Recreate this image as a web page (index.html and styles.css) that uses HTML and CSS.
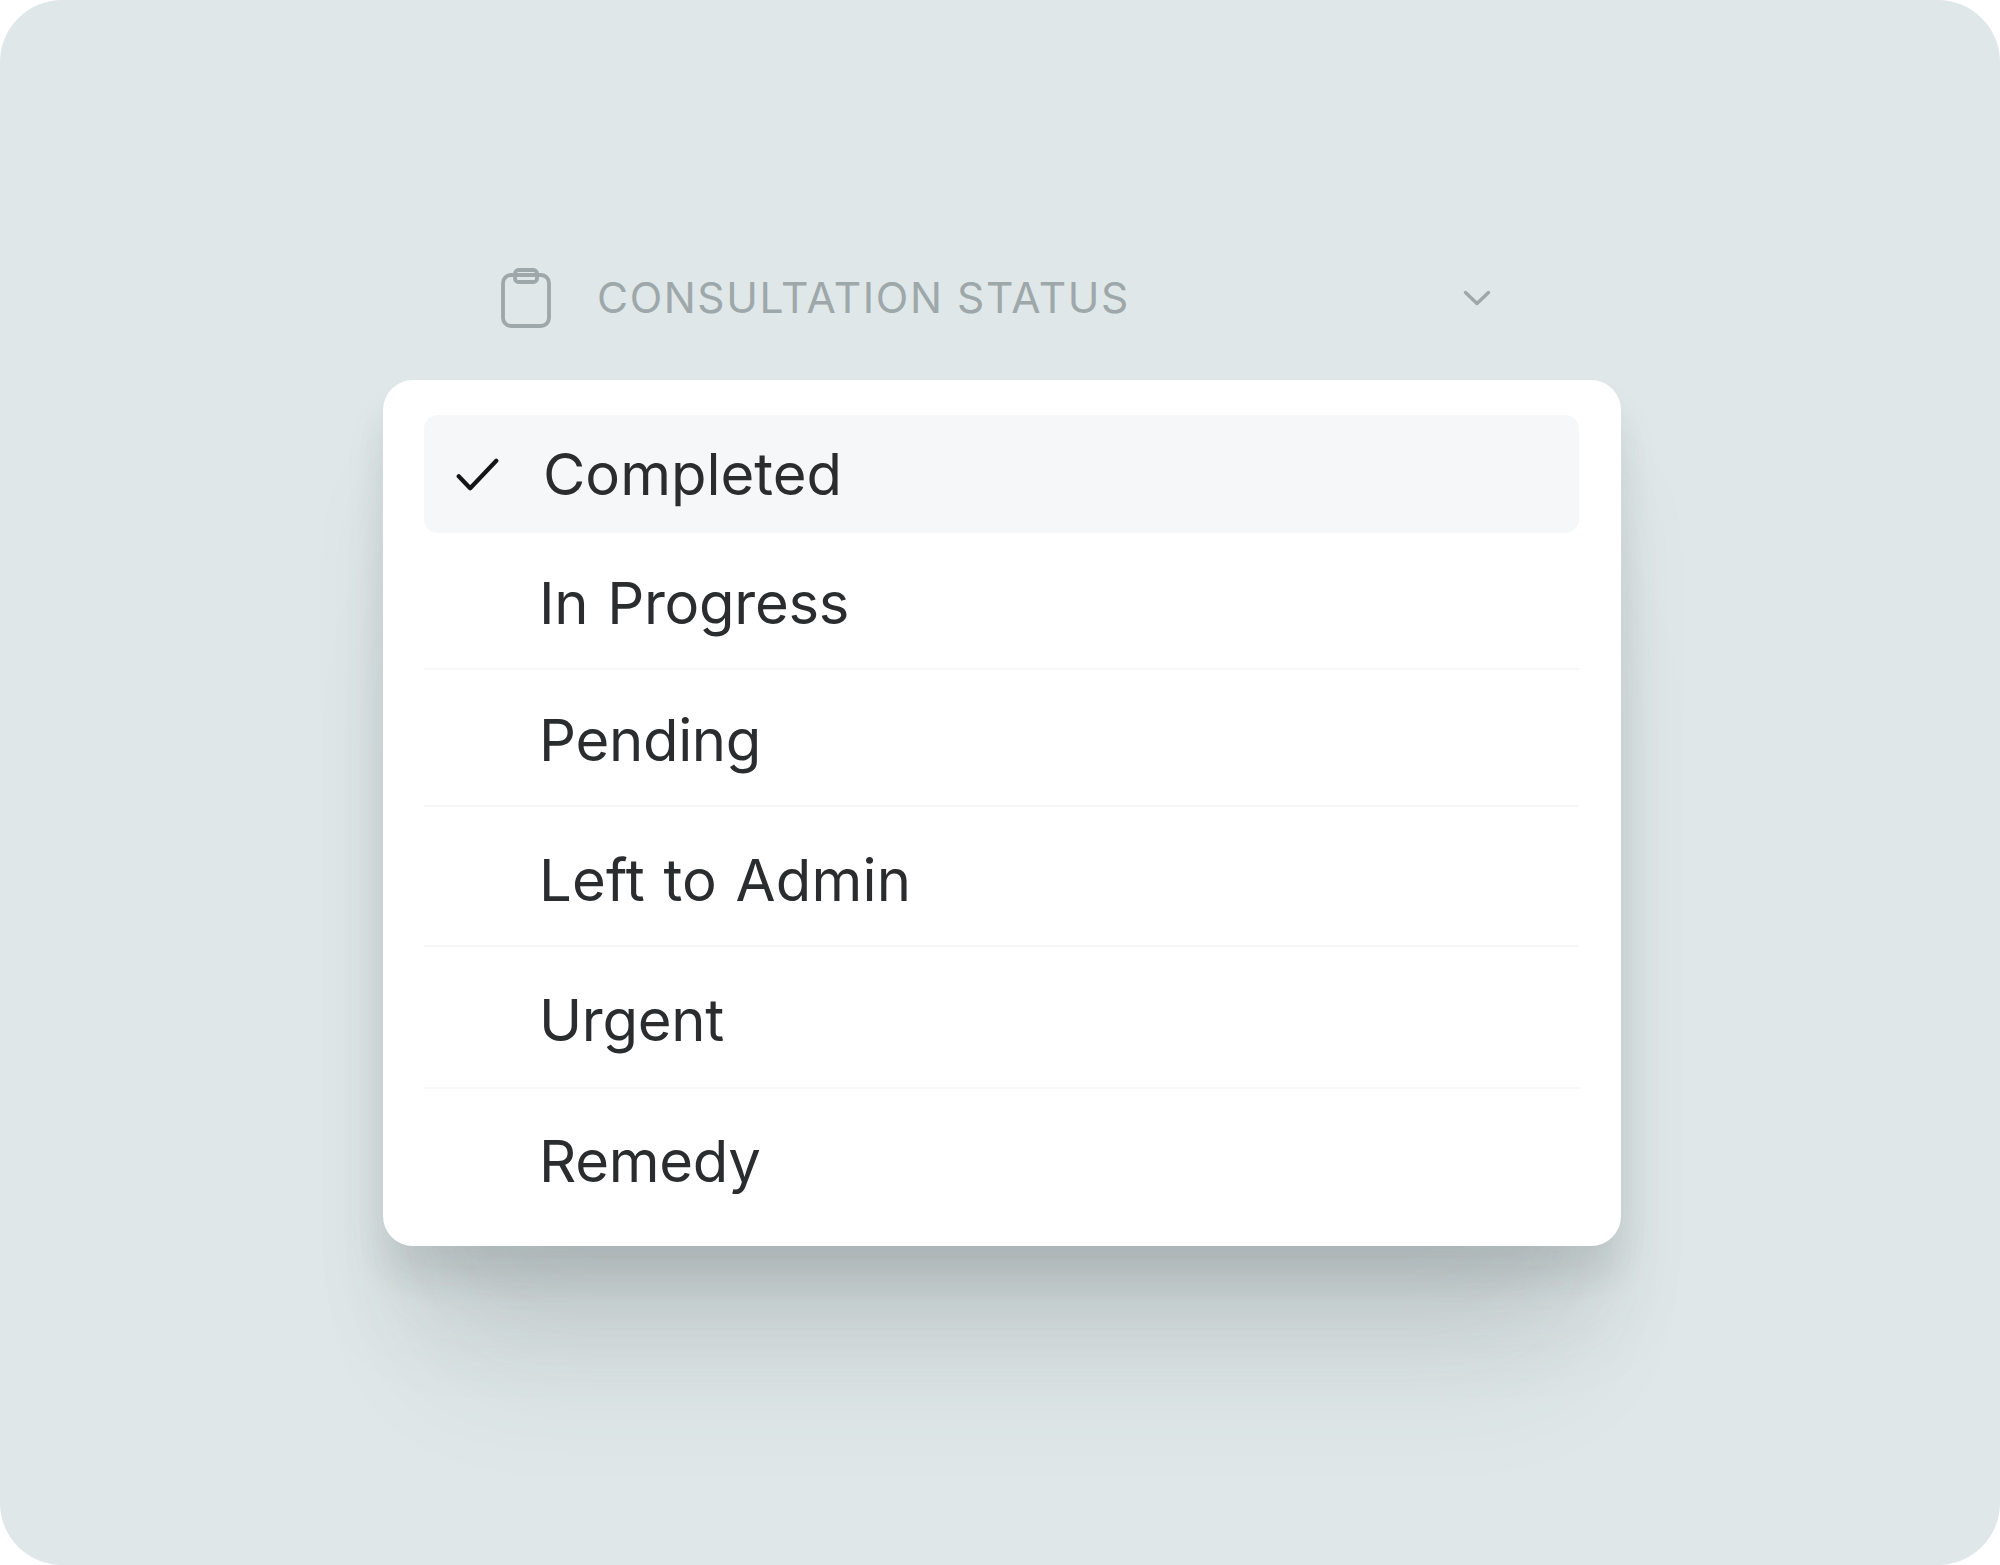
FILE: index.html
```html
<!DOCTYPE html>
<html lang="en">
<head>
    <meta charset="UTF-8">
    <meta name="viewport" content="width=device-width, initial-scale=1.0">
    <title>Consultation Status</title>
    <link rel="stylesheet" href="styles.css">
</head>
<body>
    <div class="panel">
        <div class="status">
            <svg class="status-icon" viewBox="0 0 50 60" fill="none" stroke="currentColor" stroke-width="3.8" stroke-linejoin="round">
                <rect x="2" y="7" width="46" height="51" rx="8"></rect>
                <rect x="14" y="2" width="22" height="12" rx="3.5"></rect>
            </svg>
            <span class="status-label">CONSULTATION STATUS</span>
            <svg class="status-chevron" viewBox="0 0 28 16" fill="none" stroke="currentColor" stroke-width="3.4" stroke-linecap="round" stroke-linejoin="round">
                <path d="M2.5 2.5 L14 13.5 L25.5 2.5"></path>
            </svg>
        </div>

        <div class="menu">
            <div class="option selected">
                <svg class="check" viewBox="0 0 46 36" fill="none" stroke="currentColor" stroke-width="4.6" stroke-linecap="round" stroke-linejoin="round">
                    <path d="M2.5 20 L15 33 L43.5 3"></path>
                </svg>
                <span>Completed</span>
            </div>
            <div class="option">In Progress</div>
            <div class="option">Pending</div>
            <div class="option">Left to Admin</div>
            <div class="option">Urgent</div>
            <div class="option">Remedy</div>
        </div>
    </div>
</body>
</html>
```

FILE: styles.css
```css
html, body {
    margin: 0;
    padding: 0;
    background: #fff;
}
.panel {
    box-sizing: border-box;
    width: 2000px;
    height: 1565px;
    padding: 268px 379px 0 383px;
    background-color: #dfe7e8;
    border-radius: 62px;
    overflow: hidden;
    font-family: 'Inter', sans-serif;
}
.status {
    display: flex;
    align-items: center;
    height: 60px;
    margin-bottom: 52px;
    padding: 0 130px 0 118px;
    color: #9ea7a9;
}
.status-icon {
    width: 50px;
    height: 60px;
    flex: none;
}
.status-label {
    flex: 1;
    margin-left: 46px;
    margin-bottom: 2px;
    font-size: 42.5px;
    font-weight: 400;
    letter-spacing: 1.6px;
}
.status-chevron {
    width: 28px;
    height: 16px;
    flex: none;
}
.menu {
    display: grid;
    grid-template-rows: 118px 137px 137px 140px 142px 1fr;
    box-sizing: border-box;
    height: 866px;
    padding: 35px 42px 0 41px;
    background-color: #fff;
    border-radius: 30px;
    box-shadow:
        0 30px 30px rgba(60, 70, 75, 0.07),
        0 30px 50px -4px rgba(60, 70, 75, 0.07),
        0 90px 90px -16px rgba(60, 70, 75, 0.1),
        0 170px 130px -60px rgba(60, 70, 75, 0.11);
}
.option {
    display: flex;
    align-items: center;
    padding-top: 6px;
    padding-left: 115px;
    font-size: 58px;
    letter-spacing: -0.3px;
    word-spacing: 3px;
    color: #2b2c2e;
    border-bottom: 2px solid #f6f7f7;
}
.option:nth-child(2) {
    padding-top: 4px;
}
.option:nth-child(3) {
    padding-top: 5px;
}
.option:nth-child(4) {
    padding-top: 8px;
    letter-spacing: 0.2px;
    word-spacing: 2px;
}
.option:last-child {
    border-bottom: none;
    padding-bottom: 20px;
}
.selected {
    padding-top: 0;
    padding-left: 32px;
    letter-spacing: 0;
    background-color: #f5f7f8;
    border-bottom: none;
    border-radius: 14px;
}
.check {
    width: 43px;
    height: 33px;
    margin-right: 44px;
    color: #141517;
}
```
